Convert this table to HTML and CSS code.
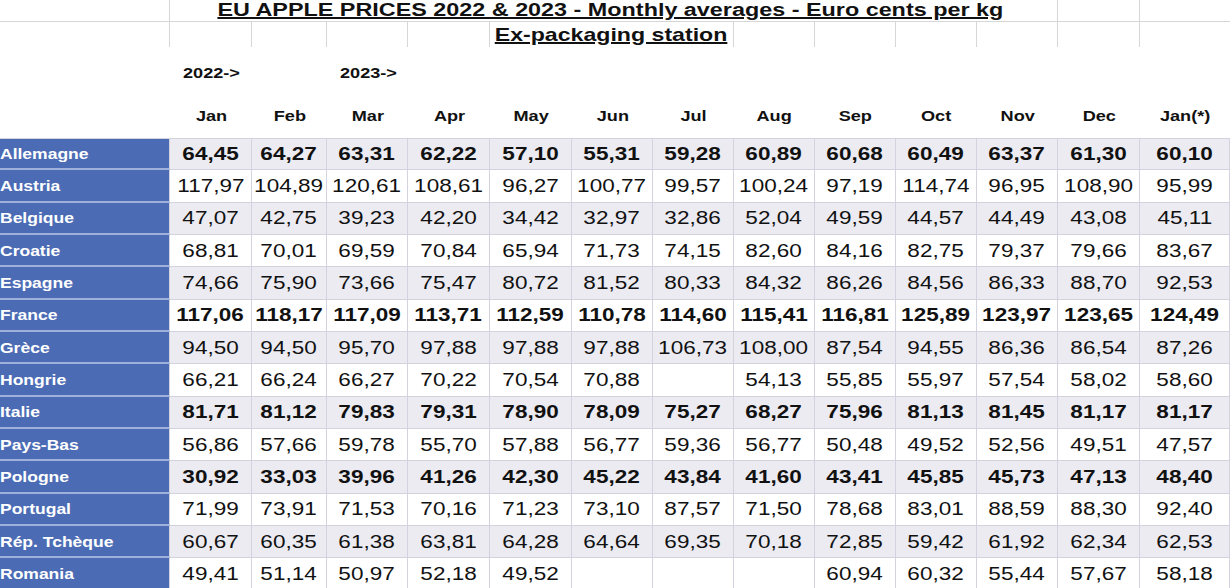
FILE: index.html
```html
<!DOCTYPE html>
<html lang="en">
<head>
<meta charset="utf-8">
<title>EU Apple Prices 2022 &amp; 2023</title>
<link rel="stylesheet" href="styles.css">
</head>
<body>
<div class="sheet">
  <!-- row 1 : title -->
  <div class="cell hd1 sep"></div>
  <div class="cell hd1 sep title-cell"><span class="wide title">EU APPLE PRICES 2022 &amp; 2023 - Monthly averages - Euro cents per kg</span></div>
  <div class="cell hd1 sep"></div>
  <div class="cell hd1"></div>

  <!-- row 2 : subtitle -->
  <div class="cell sep"></div>
  <div class="cell sep"></div>
  <div class="cell sep"></div>
  <div class="cell sep"></div>
  <div class="cell sep"></div>
  <div class="cell sep sub-cell"><span class="wide subtitle">Ex-packaging station</span></div>
  <div class="cell sep"></div>
  <div class="cell sep"></div>
  <div class="cell sep"></div>
  <div class="cell sep"></div>
  <div class="cell sep"></div>
  <div class="cell"></div>

  <!-- row 3 : years -->
  <div class="cell"></div>
  <div class="cell year"><span class="wide left">2022-&gt;</span></div>
  <div class="cell"></div>
  <div class="cell year"><span class="wide left">2023-&gt;</span></div>
  <div class="cell"></div><div class="cell"></div><div class="cell"></div><div class="cell"></div><div class="cell"></div>
  <div class="cell"></div><div class="cell"></div><div class="cell"></div><div class="cell"></div><div class="cell"></div>

  <!-- row 4 : months -->
  <div class="cell"></div>
  <div class="cell month"><span class="wide">Jan</span></div>
  <div class="cell month"><span class="wide">Feb</span></div>
  <div class="cell month"><span class="wide">Mar</span></div>
  <div class="cell month"><span class="wide">Apr</span></div>
  <div class="cell month"><span class="wide">May</span></div>
  <div class="cell month"><span class="wide">Jun</span></div>
  <div class="cell month"><span class="wide">Jul</span></div>
  <div class="cell month"><span class="wide">Aug</span></div>
  <div class="cell month"><span class="wide">Sep</span></div>
  <div class="cell month"><span class="wide">Oct</span></div>
  <div class="cell month"><span class="wide">Nov</span></div>
  <div class="cell month"><span class="wide">Dec</span></div>
  <div class="cell month"><span class="wide">Jan(*)</span></div>

  <!-- data -->
  <div class="row alt strong first">
    <div class="cell label"><span class="wide left">Allemagne</span></div>
    <div class="cell v"><span class="wide">64,45</span></div><div class="cell v"><span class="wide">64,27</span></div><div class="cell v"><span class="wide">63,31</span></div><div class="cell v"><span class="wide">62,22</span></div><div class="cell v"><span class="wide">57,10</span></div><div class="cell v"><span class="wide">55,31</span></div><div class="cell v"><span class="wide">59,28</span></div><div class="cell v"><span class="wide">60,89</span></div><div class="cell v"><span class="wide">60,68</span></div><div class="cell v"><span class="wide">60,49</span></div><div class="cell v"><span class="wide">63,37</span></div><div class="cell v"><span class="wide">61,30</span></div><div class="cell v"><span class="wide">60,10</span></div>
  </div>
  <div class="row">
    <div class="cell label"><span class="wide left">Austria</span></div>
    <div class="cell v"><span class="wide">117,97</span></div><div class="cell v"><span class="wide">104,89</span></div><div class="cell v"><span class="wide">120,61</span></div><div class="cell v"><span class="wide">108,61</span></div><div class="cell v"><span class="wide">96,27</span></div><div class="cell v"><span class="wide">100,77</span></div><div class="cell v"><span class="wide">99,57</span></div><div class="cell v"><span class="wide">100,24</span></div><div class="cell v"><span class="wide">97,19</span></div><div class="cell v"><span class="wide">114,74</span></div><div class="cell v"><span class="wide">96,95</span></div><div class="cell v"><span class="wide">108,90</span></div><div class="cell v"><span class="wide">95,99</span></div>
  </div>
  <div class="row alt">
    <div class="cell label"><span class="wide left">Belgique</span></div>
    <div class="cell v"><span class="wide">47,07</span></div><div class="cell v"><span class="wide">42,75</span></div><div class="cell v"><span class="wide">39,23</span></div><div class="cell v"><span class="wide">42,20</span></div><div class="cell v"><span class="wide">34,42</span></div><div class="cell v"><span class="wide">32,97</span></div><div class="cell v"><span class="wide">32,86</span></div><div class="cell v"><span class="wide">52,04</span></div><div class="cell v"><span class="wide">49,59</span></div><div class="cell v"><span class="wide">44,57</span></div><div class="cell v"><span class="wide">44,49</span></div><div class="cell v"><span class="wide">43,08</span></div><div class="cell v"><span class="wide">45,11</span></div>
  </div>
  <div class="row">
    <div class="cell label"><span class="wide left">Croatie</span></div>
    <div class="cell v"><span class="wide">68,81</span></div><div class="cell v"><span class="wide">70,01</span></div><div class="cell v"><span class="wide">69,59</span></div><div class="cell v"><span class="wide">70,84</span></div><div class="cell v"><span class="wide">65,94</span></div><div class="cell v"><span class="wide">71,73</span></div><div class="cell v"><span class="wide">74,15</span></div><div class="cell v"><span class="wide">82,60</span></div><div class="cell v"><span class="wide">84,16</span></div><div class="cell v"><span class="wide">82,75</span></div><div class="cell v"><span class="wide">79,37</span></div><div class="cell v"><span class="wide">79,66</span></div><div class="cell v"><span class="wide">83,67</span></div>
  </div>
  <div class="row alt">
    <div class="cell label"><span class="wide left">Espagne</span></div>
    <div class="cell v"><span class="wide">74,66</span></div><div class="cell v"><span class="wide">75,90</span></div><div class="cell v"><span class="wide">73,66</span></div><div class="cell v"><span class="wide">75,47</span></div><div class="cell v"><span class="wide">80,72</span></div><div class="cell v"><span class="wide">81,52</span></div><div class="cell v"><span class="wide">80,33</span></div><div class="cell v"><span class="wide">84,32</span></div><div class="cell v"><span class="wide">86,26</span></div><div class="cell v"><span class="wide">84,56</span></div><div class="cell v"><span class="wide">86,33</span></div><div class="cell v"><span class="wide">88,70</span></div><div class="cell v"><span class="wide">92,53</span></div>
  </div>
  <div class="row strong">
    <div class="cell label"><span class="wide left">France</span></div>
    <div class="cell v"><span class="wide">117,06</span></div><div class="cell v"><span class="wide">118,17</span></div><div class="cell v"><span class="wide">117,09</span></div><div class="cell v"><span class="wide">113,71</span></div><div class="cell v"><span class="wide">112,59</span></div><div class="cell v"><span class="wide">110,78</span></div><div class="cell v"><span class="wide">114,60</span></div><div class="cell v"><span class="wide">115,41</span></div><div class="cell v"><span class="wide">116,81</span></div><div class="cell v"><span class="wide">125,89</span></div><div class="cell v"><span class="wide">123,97</span></div><div class="cell v"><span class="wide">123,65</span></div><div class="cell v"><span class="wide">124,49</span></div>
  </div>
  <div class="row alt">
    <div class="cell label"><span class="wide left">Grèce</span></div>
    <div class="cell v"><span class="wide">94,50</span></div><div class="cell v"><span class="wide">94,50</span></div><div class="cell v"><span class="wide">95,70</span></div><div class="cell v"><span class="wide">97,88</span></div><div class="cell v"><span class="wide">97,88</span></div><div class="cell v"><span class="wide">97,88</span></div><div class="cell v"><span class="wide">106,73</span></div><div class="cell v"><span class="wide">108,00</span></div><div class="cell v"><span class="wide">87,54</span></div><div class="cell v"><span class="wide">94,55</span></div><div class="cell v"><span class="wide">86,36</span></div><div class="cell v"><span class="wide">86,54</span></div><div class="cell v"><span class="wide">87,26</span></div>
  </div>
  <div class="row">
    <div class="cell label"><span class="wide left">Hongrie</span></div>
    <div class="cell v"><span class="wide">66,21</span></div><div class="cell v"><span class="wide">66,24</span></div><div class="cell v"><span class="wide">66,27</span></div><div class="cell v"><span class="wide">70,22</span></div><div class="cell v"><span class="wide">70,54</span></div><div class="cell v"><span class="wide">70,88</span></div><div class="cell v"></div><div class="cell v"><span class="wide">54,13</span></div><div class="cell v"><span class="wide">55,85</span></div><div class="cell v"><span class="wide">55,97</span></div><div class="cell v"><span class="wide">57,54</span></div><div class="cell v"><span class="wide">58,02</span></div><div class="cell v"><span class="wide">58,60</span></div>
  </div>
  <div class="row alt strong">
    <div class="cell label"><span class="wide left">Italie</span></div>
    <div class="cell v"><span class="wide">81,71</span></div><div class="cell v"><span class="wide">81,12</span></div><div class="cell v"><span class="wide">79,83</span></div><div class="cell v"><span class="wide">79,31</span></div><div class="cell v"><span class="wide">78,90</span></div><div class="cell v"><span class="wide">78,09</span></div><div class="cell v"><span class="wide">75,27</span></div><div class="cell v"><span class="wide">68,27</span></div><div class="cell v"><span class="wide">75,96</span></div><div class="cell v"><span class="wide">81,13</span></div><div class="cell v"><span class="wide">81,45</span></div><div class="cell v"><span class="wide">81,17</span></div><div class="cell v"><span class="wide">81,17</span></div>
  </div>
  <div class="row">
    <div class="cell label"><span class="wide left">Pays-Bas</span></div>
    <div class="cell v"><span class="wide">56,86</span></div><div class="cell v"><span class="wide">57,66</span></div><div class="cell v"><span class="wide">59,78</span></div><div class="cell v"><span class="wide">55,70</span></div><div class="cell v"><span class="wide">57,88</span></div><div class="cell v"><span class="wide">56,77</span></div><div class="cell v"><span class="wide">59,36</span></div><div class="cell v"><span class="wide">56,77</span></div><div class="cell v"><span class="wide">50,48</span></div><div class="cell v"><span class="wide">49,52</span></div><div class="cell v"><span class="wide">52,56</span></div><div class="cell v"><span class="wide">49,51</span></div><div class="cell v"><span class="wide">47,57</span></div>
  </div>
  <div class="row alt strong">
    <div class="cell label"><span class="wide left">Pologne</span></div>
    <div class="cell v"><span class="wide">30,92</span></div><div class="cell v"><span class="wide">33,03</span></div><div class="cell v"><span class="wide">39,96</span></div><div class="cell v"><span class="wide">41,26</span></div><div class="cell v"><span class="wide">42,30</span></div><div class="cell v"><span class="wide">45,22</span></div><div class="cell v"><span class="wide">43,84</span></div><div class="cell v"><span class="wide">41,60</span></div><div class="cell v"><span class="wide">43,41</span></div><div class="cell v"><span class="wide">45,85</span></div><div class="cell v"><span class="wide">45,73</span></div><div class="cell v"><span class="wide">47,13</span></div><div class="cell v"><span class="wide">48,40</span></div>
  </div>
  <div class="row">
    <div class="cell label"><span class="wide left">Portugal</span></div>
    <div class="cell v"><span class="wide">71,99</span></div><div class="cell v"><span class="wide">73,91</span></div><div class="cell v"><span class="wide">71,53</span></div><div class="cell v"><span class="wide">70,16</span></div><div class="cell v"><span class="wide">71,23</span></div><div class="cell v"><span class="wide">73,10</span></div><div class="cell v"><span class="wide">87,57</span></div><div class="cell v"><span class="wide">71,50</span></div><div class="cell v"><span class="wide">78,68</span></div><div class="cell v"><span class="wide">83,01</span></div><div class="cell v"><span class="wide">88,59</span></div><div class="cell v"><span class="wide">88,30</span></div><div class="cell v"><span class="wide">92,40</span></div>
  </div>
  <div class="row alt">
    <div class="cell label"><span class="wide left">Rép. Tchèque</span></div>
    <div class="cell v"><span class="wide">60,67</span></div><div class="cell v"><span class="wide">60,35</span></div><div class="cell v"><span class="wide">61,38</span></div><div class="cell v"><span class="wide">63,81</span></div><div class="cell v"><span class="wide">64,28</span></div><div class="cell v"><span class="wide">64,64</span></div><div class="cell v"><span class="wide">69,35</span></div><div class="cell v"><span class="wide">70,18</span></div><div class="cell v"><span class="wide">72,85</span></div><div class="cell v"><span class="wide">59,42</span></div><div class="cell v"><span class="wide">61,92</span></div><div class="cell v"><span class="wide">62,34</span></div><div class="cell v"><span class="wide">62,53</span></div>
  </div>
  <div class="row">
    <div class="cell label"><span class="wide left">Romania</span></div>
    <div class="cell v"><span class="wide">49,41</span></div><div class="cell v"><span class="wide">51,14</span></div><div class="cell v"><span class="wide">50,97</span></div><div class="cell v"><span class="wide">52,18</span></div><div class="cell v"><span class="wide">49,52</span></div><div class="cell v"></div><div class="cell v"></div><div class="cell v"></div><div class="cell v"><span class="wide">60,94</span></div><div class="cell v"><span class="wide">60,32</span></div><div class="cell v"><span class="wide">55,44</span></div><div class="cell v"><span class="wide">57,67</span></div><div class="cell v"><span class="wide">58,18</span></div>
  </div>
</div>
</body>
</html>
```

FILE: styles.css
```css
html, body {
  margin: 0;
  padding: 0;
  background: #ffffff;
  overflow: hidden;
}

body {
  font-family: "Liberation Sans", Arial, sans-serif;
  color: #111111;
}

.sheet {
  display: grid;
  grid-template-columns: 170px 82px 75px 81px 82px 82px 81px 81px 81px 81px 81px 81px 82px 90px;
  grid-template-rows: 22px 25px 48px 43px repeat(14, 32.33px);
  width: 1230px;
}

.cell {
  box-sizing: border-box;
  min-width: 0;
  display: flex;
  align-items: center;
  justify-content: center;
  white-space: nowrap;
}

/* Text is drawn slightly stretched, as in the printed sheet */
.wide {
  display: inline-block;
  transform: scaleX(1.25);
}

.wide.left {
  transform-origin: left center;
}

/* Header grid lines */
.sep {
  border-right: 1px solid #d6d6d6;
}

.hd1 {
  border-bottom: 1px solid #d6d6d6;
}

.title-cell {
  grid-column: span 11;
  align-items: flex-start;
  padding-right: 6px;
}

.title {
  font-size: 18.7px;
  font-weight: bold;
  line-height: 19px;
  text-decoration: underline;
  text-decoration-thickness: 1.5px;
}

.sub-cell {
  grid-column: span 3;
  align-items: flex-start;
  padding-top: 1px;
}

.subtitle {
  font-size: 18.5px;
  font-weight: bold;
  line-height: 24px;
  text-decoration: underline;
  text-decoration-thickness: 1.5px;
}

.year {
  justify-content: flex-start;
  align-items: flex-start;
  padding-left: 13px;
  padding-top: 18px;
  font-size: 14.5px;
  font-weight: bold;
  line-height: 16px;
}

.month {
  align-items: flex-end;
  padding-bottom: 14px;
  font-size: 14.5px;
  font-weight: bold;
  line-height: 16px;
}

/* Data rows */
.row {
  display: contents;
}

.label {
  justify-content: flex-start;
  background: #4b6cb5;
  color: #ffffff;
  font-size: 14px;
  font-weight: bold;
  padding-top: 1px;
  border-bottom: 2px solid #9fb1db;
  border-right: 1px solid #d2d3de;
}

.v {
  background: #ffffff;
  font-size: 18px;
  padding-top: 1px;
  border-right: 1px solid #d2d3de;
  border-bottom: 1px solid #d2d3de;
}

.row.alt .v {
  background: #ebebf1;
}

.row.strong .v {
  font-weight: bold;
}

.row.first .cell {
  border-top: 1px solid #d2d3de;
}
```
